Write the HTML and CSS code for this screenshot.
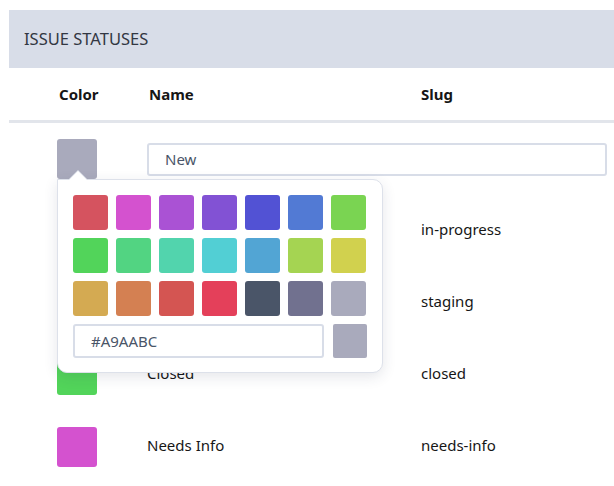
FILE: index.html
```html
<!DOCTYPE html>
<html>
<head>
<meta charset="utf-8">
<link rel="stylesheet" href="styles.css">
</head>
<body>
<div class="card">
  <div class="card-title">ISSUE STATUSES</div>
  <div class="thead">
    <div class="col-color">Color</div>
    <div class="col-name">Name</div>
    <div class="col-slug">Slug</div>
  </div>
  <div class="row">
    <div class="col-color">
      <div class="swatch-wrap">
        <div class="swatch" style="background:#A9AABC"></div>
        <div class="popover">
          <div class="arrow"></div>
          <div class="palette">
            <span class="chip" style="background:#D5535F"></span>
            <span class="chip" style="background:#D452CF"></span>
            <span class="chip" style="background:#AA52D4"></span>
            <span class="chip" style="background:#8252D4"></span>
            <span class="chip" style="background:#5252D4"></span>
            <span class="chip" style="background:#527AD4"></span>
            <span class="chip" style="background:#7AD452"></span>
            <span class="chip" style="background:#52D45A"></span>
            <span class="chip" style="background:#52D482"></span>
            <span class="chip" style="background:#52D4AD"></span>
            <span class="chip" style="background:#52CFD4"></span>
            <span class="chip" style="background:#52A5D4"></span>
            <span class="chip" style="background:#A5D452"></span>
            <span class="chip" style="background:#D1D14E"></span>
            <span class="chip" style="background:#D4AA52"></span>
            <span class="chip" style="background:#D48052"></span>
            <span class="chip" style="background:#D45552"></span>
            <span class="chip" style="background:#E4405A"></span>
            <span class="chip" style="background:#4A5568"></span>
            <span class="chip" style="background:#71718F"></span>
            <span class="chip" style="background:#A9AABC"></span>
          </div>
          <div class="hex-row">
            <div class="hex-input">#A9AABC</div>
            <div class="hex-preview" style="background:#A9AABC"></div>
          </div>
        </div>
      </div>
    </div>
    <div class="col-name span">
      <div class="name-input">New</div>
    </div>
  </div>
  <div class="row">
    <div class="col-color"><div class="swatch" style="background:#D4AA52"></div></div>
    <div class="col-name">In Progress</div>
    <div class="col-slug">in-progress</div>
  </div>
  <div class="row">
    <div class="col-color"><div class="swatch" style="background:#527AD4"></div></div>
    <div class="col-name">Staging</div>
    <div class="col-slug">staging</div>
  </div>
  <div class="row">
    <div class="col-color"><div class="swatch" style="background:#52D45A"></div></div>
    <div class="col-name">Closed</div>
    <div class="col-slug">closed</div>
  </div>
  <div class="row">
    <div class="col-color"><div class="swatch" style="background:#D452CF"></div></div>
    <div class="col-name">Needs Info</div>
    <div class="col-slug">needs-info</div>
  </div>
</div>
</body>
</html>
```
FILE: styles.css
```css
html, body {
  margin: 0;
  padding: 0;
  overflow: hidden;
  background: #fff;
}
body {
  font-family: "Noto Sans", "Open Sans", sans-serif;
  font-size: 15px;
  color: #161616;
  padding: 10px 0 0 9px;
}
.card {
  width: 100%;
}
.card-title {
  height: 58px;
  background: #d8dde8;
  display: flex;
  align-items: center;
  padding-left: 15px;
  padding-bottom: 2px;
  box-sizing: border-box;
  font-size: 16.5px;
  color: #323742;
}
.thead {
  height: 52px;
  display: grid;
  grid-template-columns: 138px 274px 1fr;
  align-items: center;
  font-weight: bold;
  border-bottom: 3px solid #e2e5eb;
}
.thead .col-color { padding-left: 50px; }
.thead .col-name { padding-left: 2px; }
.row {
  height: 72px;
  display: grid;
  grid-template-columns: 138px 274px 1fr;
  align-items: center;
}
.row .col-color { padding-left: 48px; }
.row .col-name, .row .col-slug { padding-bottom: 5px; }
.row .col-name.span { padding-bottom: 0; }
.span { grid-column: 2 / 4; }
.swatch {
  width: 40px;
  height: 40px;
  border-radius: 3px;
}
.swatch-wrap {
  position: relative;
  width: 40px;
  height: 40px;
}
.name-input {
  height: 28px;
  width: 440px;
  border: 2px solid #d8dde8;
  border-radius: 3px;
  display: flex;
  align-items: center;
  padding-left: 16px;
  padding-bottom: 1px;
  color: #4a5568;
  font-size: 15px;
}
.popover {
  position: absolute;
  left: 0;
  top: 40px;
  width: 294px;
  padding: 15px;
  padding-bottom: 14px;
  background: #fff;
  border: 1px solid #dde1ea;
  border-radius: 0 10px 10px 10px;
  box-shadow: 0 4px 14px rgba(40, 50, 80, 0.12);
  z-index: 5;
}
.arrow {
  position: absolute;
  left: 11px;
  top: -9px;
  width: 0;
  height: 0;
  border-left: 9px solid transparent;
  border-right: 9px solid transparent;
  border-bottom: 9px solid #fff;
}
.arrow::before {
  content: "";
  position: absolute;
  left: -10px;
  top: -1px;
  border-left: 10px solid transparent;
  border-right: 10px solid transparent;
  border-bottom: 10px solid #dde1ea;
  z-index: -1;
}
.palette {
  display: grid;
  grid-template-columns: repeat(7, 35px);
  gap: 8px;
}
.chip {
  display: block;
  width: 35px;
  height: 35px;
  border-radius: 3px;
}
.hex-row {
  display: flex;
  gap: 9px;
  margin-top: 8px;
}
.hex-input {
  width: 231px;
  height: 30px;
  border: 2px solid #d8dde8;
  border-radius: 3px;
  display: flex;
  align-items: center;
  padding-left: 16px;
  padding-bottom: 1px;
  box-sizing: content-box;
  width: 231px;
  height: 29px;
  color: #4a5568;
  font-size: 15px;
}
.hex-preview {
  width: 34px;
  height: 34px;
  border-radius: 2px;
}
```
